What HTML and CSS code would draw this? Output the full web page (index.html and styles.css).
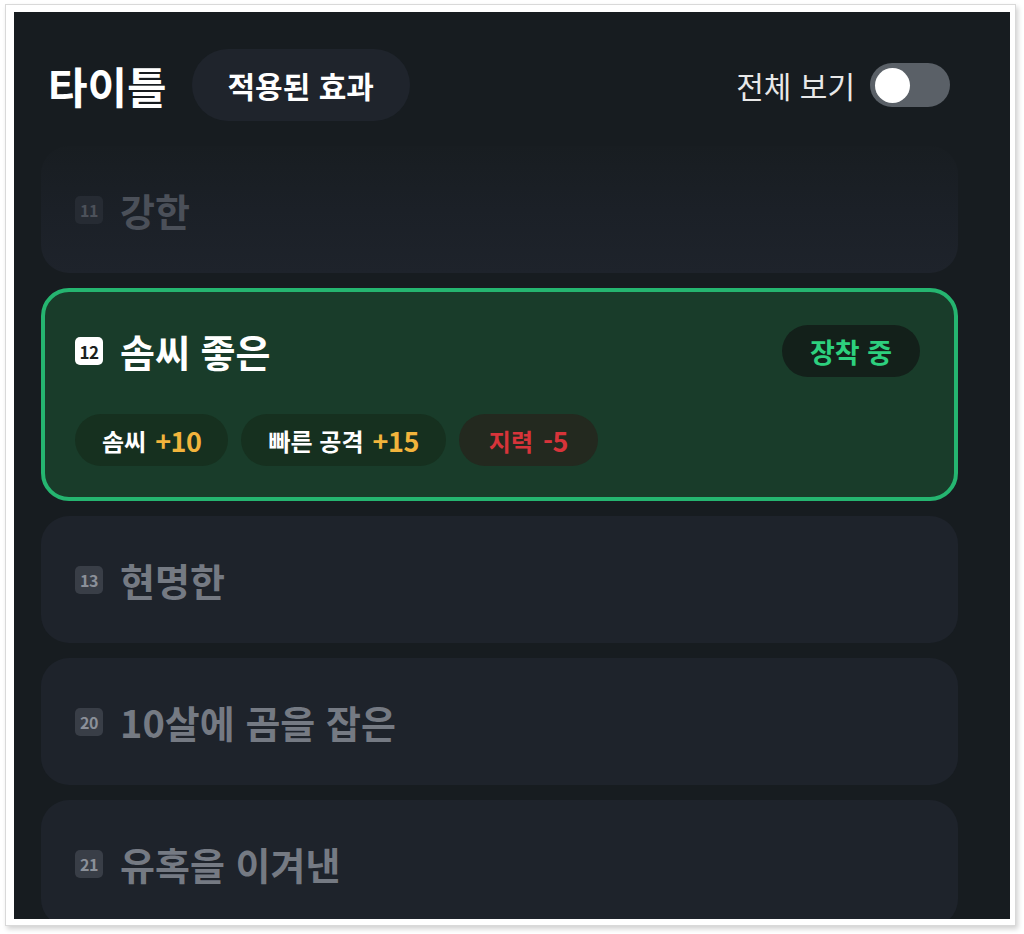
FILE: index.html
```html
<!DOCTYPE html>
<html lang="ko">
<head>
<meta charset="utf-8">
<title>타이틀</title>
<link rel="stylesheet" href="styles.css">
</head>
<body>
<div class="frame">
  <div class="panel">
    <header class="header">
      <div class="header-left">
        <h1 class="title">타이틀</h1>
        <button class="effects-btn">적용된 효과</button>
      </div>
      <div class="header-right">
        <span class="view-all">전체 보기</span>
        <span class="toggle"><span class="knob"></span></span>
      </div>
    </header>

    <div class="list">
      <div class="card card-faded">
        <div class="card-head">
          <span class="lvl">11</span>
          <span class="name">강한</span>
        </div>
      </div>

      <div class="card card-active">
        <div class="active-top">
          <div class="card-head">
            <span class="lvl lvl-active">12</span>
            <span class="name name-active">솜씨 좋은</span>
          </div>
          <span class="equipped">장착 중</span>
        </div>
        <div class="chips">
          <span class="chip"><span class="chip-label">솜씨</span><span class="chip-val plus">+10</span></span>
          <span class="chip"><span class="chip-label">빠른 공격</span><span class="chip-val plus">+15</span></span>
          <span class="chip chip-neg"><span class="chip-label neg">지력</span><span class="chip-val neg">-5</span></span>
        </div>
      </div>

      <div class="card">
        <div class="card-head">
          <span class="lvl">13</span>
          <span class="name">현명한</span>
        </div>
      </div>

      <div class="card">
        <div class="card-head">
          <span class="lvl">20</span>
          <span class="name">10살에 곰을 잡은</span>
        </div>
      </div>

      <div class="card">
        <div class="card-head">
          <span class="lvl">21</span>
          <span class="name">유혹을 이겨낸</span>
        </div>
      </div>
    </div>
  </div>
</div>
</body>
</html>
```

FILE: styles.css
```css
* { box-sizing: border-box; }

html, body {
  margin: 0;
  padding: 0;
  background: #ffffff;
  font-family: "Noto Sans CJK KR", "Noto Sans", sans-serif;
}

body {
  width: 1024px;
  height: 934px;
  overflow: hidden;
}

.frame {
  margin: 4px 0 0 5px;
  width: 1011px;
  height: 922px;
  border: 1px solid #d9d9d9;
  padding: 7px 5px 6px 8px;
  background: #ffffff;
  box-shadow: 2px 3px 5px rgba(0, 0, 0, 0.18);
}

.panel {
  width: 996px;
  height: 907px;
  background: #171c20;
  overflow: hidden;
}

/* header */
.header {
  display: flex;
  align-items: center;
  justify-content: space-between;
  padding: 37px 60px 0 34px;
  height: 109px;
}

.header-left {
  display: flex;
  align-items: center;
  gap: 25px;
}

.title {
  margin: 0;
  font-size: 43px;
  font-weight: 700;
  color: #ffffff;
  letter-spacing: 0;
  line-height: 1;
}

.effects-btn {
  border: none;
  background: #1f242c;
  color: #ffffff;
  font-family: inherit;
  font-size: 30px;
  font-weight: 700;
  height: 72px;
  width: 218px;
  border-radius: 36px;
  padding: 0;
  letter-spacing: 0;
}

.header-right {
  display: flex;
  align-items: center;
  gap: 15px;
}

.view-all {
  font-size: 30px;
  font-weight: 400;
  color: #e8e8e8;
  letter-spacing: 0;
}

.toggle {
  width: 80px;
  height: 44px;
  border-radius: 22px;
  background: #5a6067;
  display: flex;
  align-items: center;
  padding-left: 5px;
}

.knob {
  width: 35px;
  height: 35px;
  border-radius: 50%;
  background: #ffffff;
}

/* list */
.list {
  display: flex;
  flex-direction: column;
  gap: 15px;
  padding: 25px 52px 0 27px;
}

.card {
  background: #1e232b;
  border-radius: 28px;
  height: 127px;
  padding: 0 34px;
  display: flex;
  align-items: center;
  flex-shrink: 0;
}

.card-faded {
  background: linear-gradient(to bottom, #181d21 0%, #1b2027 50%, #1e232b 100%);
}

.card-head {
  display: flex;
  align-items: center;
  gap: 17px;
}

.lvl {
  width: 28px;
  height: 28px;
  border-radius: 5px;
  background: #393e47;
  color: #8b9099;
  font-size: 16px;
  font-weight: 700;
  display: flex;
  align-items: center;
  justify-content: center;
  letter-spacing: -0.5px;
}

.name {
  font-size: 38px;
  font-weight: 700;
  color: #757a83;
  letter-spacing: 0;
  line-height: 1;
}

.card-faded .lvl {
  background: #262b33;
  color: #4c515a;
}

.card-faded .name {
  color: #4b5059;
}

/* active card */
.card-active {
  height: 213px;
  background: #193c2a;
  border: 4px solid #25b570;
  padding: 33px 34px 31px 30px;
  display: flex;
  flex-direction: column;
  align-items: stretch;
  justify-content: space-between;
}

.active-top {
  display: flex;
  align-items: center;
  justify-content: space-between;
}

.lvl-active {
  background: #ffffff;
  color: #1a1f1c;
  font-size: 17px;
}

.name-active {
  color: #ffffff;
}

.equipped {
  height: 52px;
  width: 138px;
  border-radius: 26px;
  background: #13201a;
  color: #2dd07e;
  font-size: 27px;
  font-weight: 700;
  display: flex;
  align-items: center;
  justify-content: center;
  letter-spacing: 0;
}

.chips {
  display: flex;
  gap: 13px;
}

.chip {
  height: 52px;
  border-radius: 26px;
  background: #16301f;
  padding: 0 27px;
  display: flex;
  align-items: center;
  gap: 9px;
}

.chip-neg {
  background: #23291f;
  padding: 0 30px;
  gap: 10px;
}

.chip-label {
  font-size: 24px;
  font-weight: 700;
  color: #ffffff;
  letter-spacing: 0;
}

.chip-val {
  font-size: 27px;
  font-weight: 700;
  letter-spacing: -0.5px;
}

.plus { color: #f2b43c; }
.neg { color: #d7343a; }
```
